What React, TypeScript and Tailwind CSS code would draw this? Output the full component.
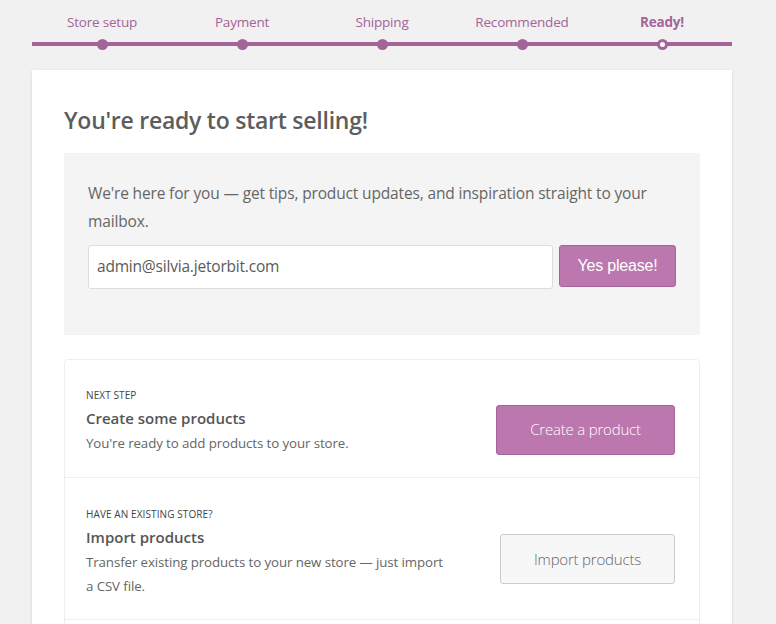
import React from "react";

const steps = ["Store setup", "Payment", "Shipping", "Recommended", "Ready!"];

export default function App() {
  return (
    <div
      className="min-h-[624px] bg-[#f1f1f1] px-[32px] pt-[12px]"
      style={{ fontFamily: '"Open Sans", "Noto Sans", sans-serif' }}
    >
      {/* Stepper */}
      <div className="relative flex w-[700px]">
        <div className="absolute left-0 right-0 top-[30px] h-[4px] bg-[#a46497]" />
        {steps.map((s, i) => {
          const last = i === steps.length - 1;
          return (
            <div key={s} className="relative flex w-[140px] flex-col items-center">
              <span
                className={`text-[13.5px] leading-[20px] tracking-[-0.2px] text-[#a46497] ${
                  last ? "font-bold" : ""
                }`}
              >
                {s}
              </span>
              <div className="mt-[6px] flex h-[12px] items-center justify-center">
                {last ? (
                  <div className="h-[11px] w-[11px] rounded-full border-[3px] border-[#a46497] bg-white" />
                ) : (
                  <div className="h-[11px] w-[11px] rounded-full bg-[#a46497]" />
                )}
              </div>
            </div>
          );
        })}
      </div>

      {/* Card */}
      <div className="mt-[20px] w-[700px] bg-white px-[32px] pb-[32px] pt-[34px] shadow-[0_1px_3px_rgba(0,0,0,0.13)]">
        <h1 className="text-[23px] font-semibold leading-[32px] tracking-[-0.25px] text-[#5d5d5d]">
          You're ready to start selling!
        </h1>

        <div className="mt-[17px] h-[182px] bg-[#f4f4f4] px-[24px] pt-[26px]">
          <p className="text-[15.5px] leading-[28px] tracking-[-0.15px] text-[#666]">
            We're here for you — get tips, product updates, and inspiration straight to your mailbox.
          </p>
          <div className="mt-[10px] flex gap-[6px]">
            <div className="flex h-[44px] w-[465px] items-center rounded-[3px] border border-[#ddd] bg-white px-[8px] text-[15.5px] tracking-[-0.2px] text-[#5a5a5a]">
              admin@silvia.jetorbit.com
            </div>
            <button
              className="h-[42px] w-[117px] rounded-[3px] border border-[#a36597] bg-[#bb77ae] text-[16px] tracking-[-0.2px] text-white"
              style={{ fontFamily: '"Liberation Sans", Arial, sans-serif' }}
            >
              Yes please!
            </button>
          </div>
        </div>

        <div className="mt-[24px] rounded-[4px] border border-[#eee]">
          <div className="flex h-[118px] items-center justify-between border-b border-[#eee] pl-[21px] pr-[24px]">
            <div className="pt-[4px]">
              <div className="text-[10px] uppercase leading-[16px] tracking-[0.1px] text-[#444]">Next step</div>
              <div className="mt-[4px] text-[15px] font-semibold leading-[22px] text-[#555]">
                Create some products
              </div>
              <div className="mt-[3px] text-[13.3px] leading-[22px] tracking-[-0.1px] text-[#666]">
                You're ready to add products to your store.
              </div>
            </div>
            <button className="mt-[22px] h-[50px] w-[179px] rounded-[3px] border border-[#a36597] bg-[#bb77ae] text-[15px] font-light tracking-[-0.2px] text-white">
              Create a product
            </button>
          </div>
          <div className="flex h-[142px] items-center justify-between border-b border-[#eee] pl-[21px] pr-[24px]">
            <div className="pt-[6px]">
              <div className="text-[10px] uppercase leading-[16px] tracking-[0.1px] text-[#444]">
                Have an existing store?
              </div>
              <div className="mt-[4px] text-[15px] font-semibold leading-[22px] text-[#555]">Import products</div>
              <div className="mt-[2px] w-[362px] text-[13.3px] leading-[24px] tracking-[-0.1px] text-[#666]">
                Transfer existing products to your new store — just import a CSV file.
              </div>
            </div>
            <button className="mt-[21px] h-[50px] w-[175px] rounded-[3px] border border-[#ccc] bg-[#f7f7f7] text-[15px] font-light tracking-[-0.2px] text-[#666]">
              Import products
            </button>
          </div>
          <div className="h-[40px]" />
        </div>
      </div>
    </div>
  );
}
